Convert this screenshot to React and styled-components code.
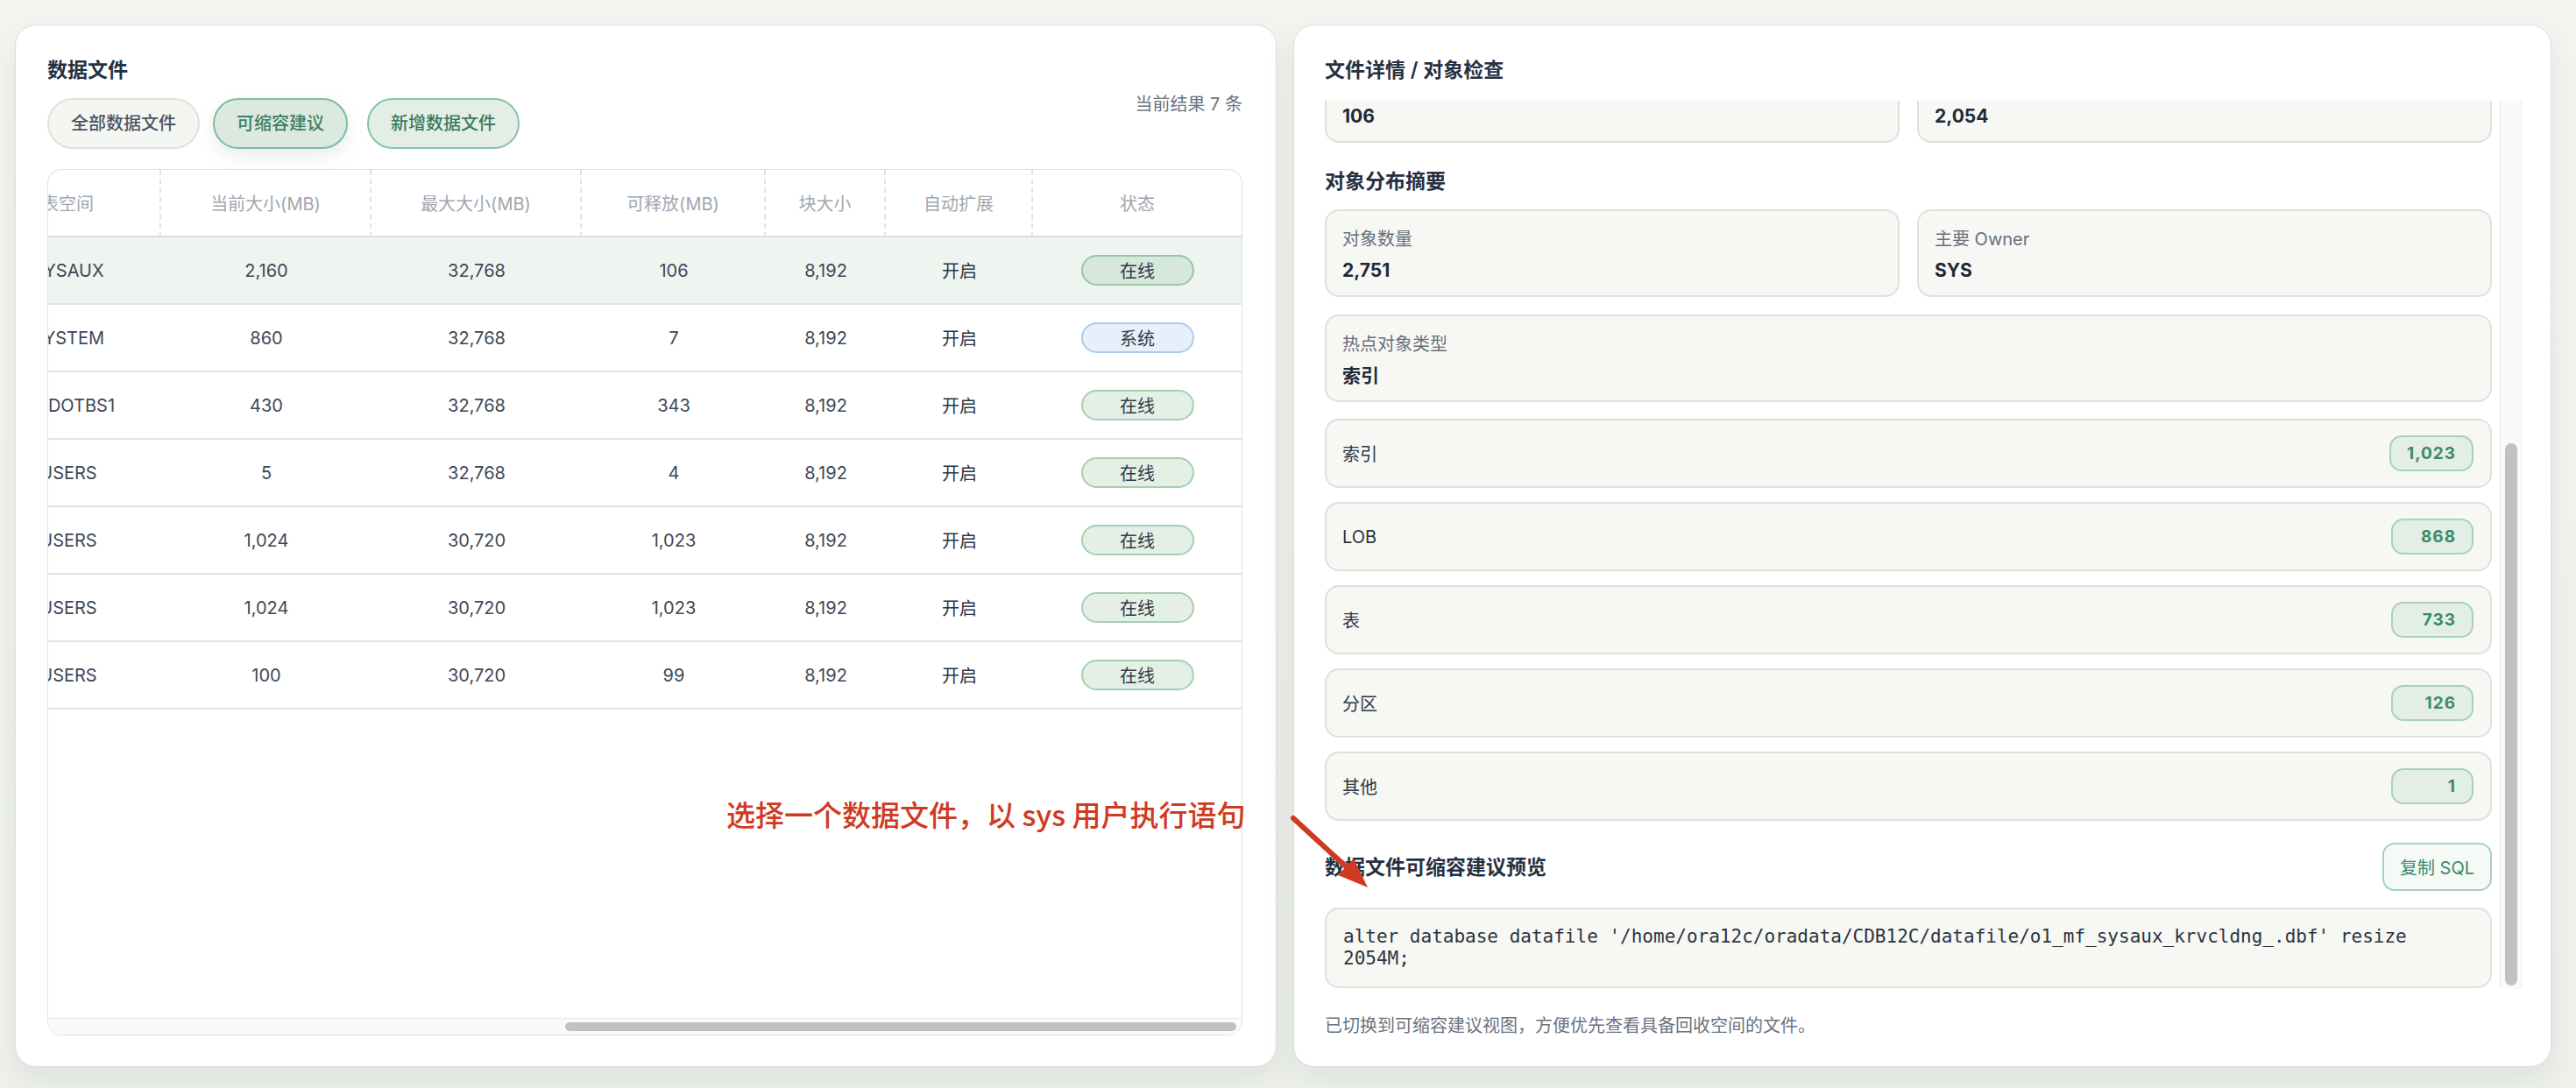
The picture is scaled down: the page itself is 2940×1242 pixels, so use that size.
import React, { useLayoutEffect, useRef, useState } from 'react';
import styled, { createGlobalStyle, css } from 'styled-components';

const GlobalStyle = createGlobalStyle`
  html, body { margin: 0; padding: 0; }
  body {
    background: #f1f3ef;
    font-family: Inter, "Noto Sans CJK SC", sans-serif;
    color: #253142;
  }
  * { box-sizing: border-box; }
`;

const Page = styled.div`
  position: relative;
  width: 2940px;
  height: 1242px;
  overflow: hidden;
  background: linear-gradient(180deg, #f3f5f1 0%, #eef1ec 100%);
  display: grid;
  grid-template-columns: 1440px 1436px;
  column-gap: 19px;
  align-items: start;
  padding: 28px 0 0 17px;
`;

const Card = styled.section`
  height: 1190px;
  background: #fff;
  border: 1px solid #dbe0dc;
  border-radius: 24px;
  box-shadow: 0 14px 34px rgba(50, 70, 50, 0.09);
  display: flex;
  flex-direction: column;
  padding: ${p => p.$pad};
`;

const PanelTitle = styled.h2`
  margin: 0;
  font-size: 23px;
  line-height: 32px;
  font-weight: 600;
  color: #253142;
`;

/* ---------- left: data files ---------- */

const PanelHead = styled.div`
  display: flex;
  justify-content: space-between;
  align-items: center;
`;

const HeadMain = styled.div`
  display: flex;
  flex-direction: column;
  gap: 16px;
`;

const FilterRow = styled.div`
  display: flex;
  gap: 15px;
`;

const FilterButton = styled.button`
  height: 58px;
  padding: 0 25px;
  border-radius: 29px;
  border: 2px solid #dde2dc;
  background: #f4f6f2;
  color: #4b5563;
  font-family: inherit;
  font-size: 20px;
  font-weight: 500;
  line-height: 1;
  cursor: pointer;
  ${p => p.$variant === 'active' && css`
    background: #dbe9e1;
    border-color: #7fbca1;
    color: #3d8061;
    box-shadow: 0 8px 20px rgba(60, 120, 90, 0.13);
  `}
  ${p => p.$variant === 'add' && css`
    margin-left: 7px;
    background: #e3eee7;
    border-color: #8ac2a8;
    color: #3a7a5c;
  `}
`;

const ResultMeta = styled.span`
  font-size: 20px;
  color: #6b7380;
`;

const TableFrame = styled.div`
  flex: 1;
  min-height: 0;
  margin-top: 23px;
  border: 1px solid #dce2df;
  border-radius: 16px;
  overflow: hidden;
  display: flex;
  flex-direction: column;
`;

const TableViewport = styled.div`
  flex: 1;
  min-height: 0;
  overflow: hidden;
`;

const HTrack = styled.div`
  flex-shrink: 0;
  height: 19px;
  padding: 4px 6px 4px 0;
  background: #fafafa;
  border-top: 1px solid #e6e6e6;
`;

const HThumb = styled.div`
  height: 10px;
  border-radius: 5px;
  background: #c1c1c1;
`;

const Table = styled.table`
  width: 2411px;
  table-layout: fixed;
  border-collapse: separate;
  border-spacing: 0;
`;

const Col = styled.col`
  width: ${p => p.$w}px;
`;

const HeadCell = styled.th`
  height: 77px;
  padding: 0 12px;
  font-size: 20px;
  font-weight: 400;
  color: #a0a7b0;
  text-align: center;
  white-space: nowrap;
  border-bottom: 2px solid #d9e1dd;
  border-right: 2px dashed #e0e3e6;
  &:last-child { border-right: none; }
`;

const Row = styled.tr`
  background: ${p => (p.$selected ? '#eef5f1' : '#fff')};
`;

const Cell = styled.td`
  height: 77px;
  padding: 0 12px;
  font-size: 20px;
  color: ${p => (p.$strong ? '#2b3542' : '#3e4856')};
  text-align: center;
  white-space: nowrap;
  overflow: hidden;
  border-bottom: 2px solid #e0e6e3;
`;

const StatusPill = styled.span`
  display: inline-flex;
  align-items: center;
  justify-content: center;
  width: 129px;
  height: 35px;
  border-radius: 18px;
  font-size: 20px;
  color: #2f3a48;
  border: 2px solid ${p => (p.$kind === 'system' ? '#a9cbef' : p.$selected ? '#98c5a5' : '#a6cfb2')};
  background: ${p => (p.$kind === 'system' ? '#e7f0fa' : p.$selected ? '#d6e7dc' : '#e4efe6')};
`;

/* ---------- right: details ---------- */

const DetailFrame = styled.div`
  flex: 1;
  min-height: 0;
  margin-top: 19px;
  display: flex;
`;

const DetailViewport = styled.div`
  flex: 1;
  min-width: 0;
  overflow: hidden;
  padding: 22px 9px 0 0;
`;

const VTrack = styled.div`
  flex-shrink: 0;
  width: 25px;
  padding: 3px 4px 3px 5px;
  background: #fafafa;
  border-left: 1px solid #e6e6e6;
  border-right: 1px solid #eeeeee;
`;

const VThumb = styled.div`
  width: 14px;
  border-radius: 7px;
  background: #c1c1c1;
`;

const SectionTitle = styled(PanelTitle).attrs({ as: 'h3' })`
  margin-top: ${p => p.$top || 0}px;
`;

const SectionNote = styled.p`
  margin: 8px 0 16px;
  font-size: 19px;
  line-height: 26px;
  color: #6b7380;
`;

const InfoGrid = styled.div`
  display: grid;
  grid-template-columns: 1fr 1fr;
  gap: 20px;
  margin-top: ${p => p.$top || 0}px;
`;

const InfoCard = styled.div`
  grid-column: ${p => (p.$wide ? '1 / -1' : 'auto')};
  height: 100px;
  padding: 20px 18px 0;
  background: #f7f8f4;
  border: 2px solid #dbe2de;
  border-radius: 16px;
`;

const InfoLabel = styled.div`
  font-size: 20px;
  line-height: 24px;
  color: #66707c;
`;

const InfoValue = styled.div`
  margin-top: 10px;
  font-size: 21px;
  line-height: 28px;
  font-weight: 700;
  color: #1f2a37;
`;

const TypeList = styled.div`
  display: flex;
  flex-direction: column;
  gap: 16px;
  margin-top: 19px;
`;

const TypeRow = styled.div`
  height: 79px;
  padding: 0 19px 0 18px;
  display: flex;
  align-items: center;
  justify-content: space-between;
  background: #f7f8f4;
  border: 2px solid #dbe2de;
  border-radius: 16px;
  font-size: 20px;
  color: #2b3542;
`;

const CountBadge = styled.span`
  display: inline-flex;
  align-items: center;
  justify-content: flex-end;
  min-width: 94px;
  height: 41px;
  padding: 0 18px;
  border: 2px solid #a9d1bf;
  border-radius: 14px;
  background: #e3eee7;
  color: #3d8a69;
  font-size: 19px;
  font-weight: 700;
  letter-spacing: 1px;
`;

const SqlHead = styled.div`
  display: flex;
  align-items: center;
  justify-content: space-between;
  margin-top: 25px;
`;

const CopyButton = styled.button`
  height: 55px;
  padding: 0 18px;
  border: 2px solid #a6d3bf;
  border-radius: 14px;
  background: #f5faf7;
  color: #3f8a6b;
  font-family: inherit;
  font-size: 20px;
  cursor: pointer;
`;

const SqlBox = styled.pre`
  margin: 19px 0 0;
  padding: 19px;
  background: #f7f8f4;
  border: 2px solid #dbe2de;
  border-radius: 16px;
  font-family: "DejaVu Sans Mono", "Liberation Mono", monospace;
  font-size: 21px;
  line-height: 25px;
  color: #2a3441;
  white-space: pre-wrap;
`;

const FootNote = styled.p`
  margin: 30px 0 0;
  font-size: 20px;
  line-height: 26px;
  color: #6b7380;
`;

/* ---------- annotation over the screenshot ---------- */

const Annotation = styled.div`
  position: absolute;
  left: 829px;
  top: 908px;
  font-family: "Noto Sans CJK SC", sans-serif;
  font-size: 33px;
  line-height: 42px;
  font-weight: 500;
  color: #d03a22;
  white-space: nowrap;
  pointer-events: none;
`;

const ArrowLayer = styled.svg`
  position: absolute;
  left: 0;
  top: 0;
  pointer-events: none;
`;

const columns = [
  { key: 'id', label: '文件号', w: 120 },
  { key: 'name', label: '文件名', w: 846 },
  { key: 'ts', label: '表空间', w: 212 },
  { key: 'cur', label: '当前大小(MB)', w: 240 },
  { key: 'max', label: '最大大小(MB)', w: 240 },
  { key: 'free', label: '可释放(MB)', w: 210 },
  { key: 'block', label: '块大小', w: 137 },
  { key: 'auto', label: '自动扩展', w: 168 },
  { key: 'status', label: '状态', w: 238 },
];

const files = [
  { id: 3, name: '/home/ora12c/oradata/CDB12C/datafile/o1_mf_sysaux_krvcldng_.dbf', ts: 'SYSAUX', cur: '2,160', max: '32,768', free: '106', status: 'online', selected: true },
  { id: 1, name: '/home/ora12c/oradata/CDB12C/datafile/o1_mf_system_krvchjv4_.dbf', ts: 'SYSTEM', cur: '860', max: '32,768', free: '7', status: 'system' },
  { id: 4, name: '/home/ora12c/oradata/CDB12C/datafile/o1_mf_undotbs1_krvcmgxl_.dbf', ts: 'UNDOTBS1', cur: '430', max: '32,768', free: '343', status: 'online' },
  { id: 7, name: '/home/ora12c/oradata/CDB12C/datafile/o1_mf_users_krvcmhzd_.dbf', ts: 'USERS', cur: '5', max: '32,768', free: '4', status: 'online' },
  { id: 12, name: '/home/ora12c/oradata/CDB12C/datafile/users02.dbf', ts: 'USERS', cur: '1,024', max: '30,720', free: '1,023', status: 'online' },
  { id: 13, name: '/home/ora12c/oradata/CDB12C/datafile/users03.dbf', ts: 'USERS', cur: '1,024', max: '30,720', free: '1,023', status: 'online' },
  { id: 14, name: '/home/ora12c/oradata/CDB12C/datafile/users04.dbf', ts: 'USERS', cur: '100', max: '30,720', free: '99', status: 'online' },
];

const basicInfo = [
  ['文件号', '3'],
  ['表空间', 'SYSAUX'],
  ['文件名', 'o1_mf_sysaux_krvcldng_.dbf'],
  ['状态', '在线'],
  ['当前大小(MB)', '2,160'],
  ['最大大小(MB)', '32,768'],
  ['块大小', '8,192'],
  ['自动扩展', '开启'],
  ['可释放(MB)', '106'],
  ['建议收缩至(MB)', '2,054'],
];

const objectTypes = [
  ['索引', '1,023'],
  ['LOB', '868'],
  ['表', '733'],
  ['分区', '126'],
  ['其他', '1'],
];

const sql = "alter database datafile '/home/ora12c/oradata/CDB12C/datafile/o1_mf_sysaux_krvcldng_.dbf' resize 2054M;";

export default function App() {
  const tableRef = useRef(null);
  const hTrackRef = useRef(null);
  const detailRef = useRef(null);
  const vTrackRef = useRef(null);
  const [hBar, setHBar] = useState({ left: 0, width: 0 });
  const [vBar, setVBar] = useState({ top: 0, height: 0 });

  useLayoutEffect(() => {
    // 表格滚到最右，详情滚到底部，并按滚动位置画出滚动条
    const t = tableRef.current;
    t.scrollLeft = t.scrollWidth;
    const hInner = hTrackRef.current.clientWidth - 6;
    setHBar({
      left: (hInner * t.scrollLeft) / t.scrollWidth,
      width: (hInner * t.clientWidth) / t.scrollWidth,
    });

    const d = detailRef.current;
    d.scrollTop = d.scrollHeight;
    const vInner = vTrackRef.current.clientHeight - 6;
    setVBar({
      top: (vInner * d.scrollTop) / d.scrollHeight,
      height: (vInner * d.clientHeight) / d.scrollHeight,
    });
  }, []);

  return (
    <Page>
      <GlobalStyle />

      <Card $pad="35px 38px 35px 36px">
        <PanelHead>
          <HeadMain>
            <PanelTitle>数据文件</PanelTitle>
            <FilterRow>
              <FilterButton>全部数据文件</FilterButton>
              <FilterButton $variant="active">可缩容建议</FilterButton>
              <FilterButton $variant="add">新增数据文件</FilterButton>
            </FilterRow>
          </HeadMain>
          <ResultMeta>当前结果 7 条</ResultMeta>
        </PanelHead>

        <TableFrame>
          <TableViewport ref={tableRef}>
            <Table>
              <colgroup>
                {columns.map(c => <Col key={c.key} $w={c.w} />)}
              </colgroup>
              <thead>
                <tr>
                  {columns.map(c => <HeadCell key={c.key}>{c.label}</HeadCell>)}
                </tr>
              </thead>
              <tbody>
                {files.map(f => (
                  <Row key={f.id} $selected={f.selected}>
                    <Cell>{f.id}</Cell>
                    <Cell>{f.name}</Cell>
                    <Cell>{f.ts}</Cell>
                    <Cell>{f.cur}</Cell>
                    <Cell>{f.max}</Cell>
                    <Cell>{f.free}</Cell>
                    <Cell>8,192</Cell>
                    <Cell $strong>开启</Cell>
                    <Cell>
                      <StatusPill $kind={f.status} $selected={f.selected}>
                        {f.status === 'system' ? '系统' : '在线'}
                      </StatusPill>
                    </Cell>
                  </Row>
                ))}
              </tbody>
            </Table>
          </TableViewport>
          <HTrack ref={hTrackRef}>
            <HThumb style={{ marginLeft: hBar.left, width: hBar.width }} />
          </HTrack>
        </TableFrame>
      </Card>

      <Card $pad="35px 33px 33px 35px">
        <PanelTitle>文件详情 / 对象检查</PanelTitle>

        <DetailFrame>
          <DetailViewport ref={detailRef}>
            <SectionTitle>基本信息</SectionTitle>
            <SectionNote>所选数据文件的属性与空间使用情况</SectionNote>
            <InfoGrid>
              {basicInfo.map(([label, value]) => (
                <InfoCard key={label}>
                  <InfoLabel>{label}</InfoLabel>
                  <InfoValue>{value}</InfoValue>
                </InfoCard>
              ))}
            </InfoGrid>

            <SectionTitle $top={28}>对象分布摘要</SectionTitle>
            <InfoGrid $top={16}>
              <InfoCard>
                <InfoLabel>对象数量</InfoLabel>
                <InfoValue>2,751</InfoValue>
              </InfoCard>
              <InfoCard>
                <InfoLabel>主要 Owner</InfoLabel>
                <InfoValue>SYS</InfoValue>
              </InfoCard>
              <InfoCard $wide>
                <InfoLabel>热点对象类型</InfoLabel>
                <InfoValue>索引</InfoValue>
              </InfoCard>
            </InfoGrid>

            <TypeList>
              {objectTypes.map(([label, count]) => (
                <TypeRow key={label}>
                  <span>{label}</span>
                  <CountBadge>{count}</CountBadge>
                </TypeRow>
              ))}
            </TypeList>

            <SqlHead>
              <PanelTitle as="h3">数据文件可缩容建议预览</PanelTitle>
              <CopyButton>复制 SQL</CopyButton>
            </SqlHead>
            <SqlBox>{sql}</SqlBox>
          </DetailViewport>
          <VTrack ref={vTrackRef}>
            <VThumb style={{ marginTop: vBar.top, height: vBar.height }} />
          </VTrack>
        </DetailFrame>

        <FootNote>已切换到可缩容建议视图，方便优先查看具备回收空间的文件。</FootNote>
      </Card>

      <Annotation>选择一个数据文件，以 sys 用户执行语句</Annotation>
      <ArrowLayer width="2940" height="1242" viewBox="0 0 2940 1242">
        <line x1="1476" y1="934" x2="1538" y2="991" stroke="#d03a22" strokeWidth="6" strokeLinecap="round" />
        <polygon points="1561,1013 1527,999 1545,980" fill="#d03a22" />
      </ArrowLayer>
    </Page>
  );
}
